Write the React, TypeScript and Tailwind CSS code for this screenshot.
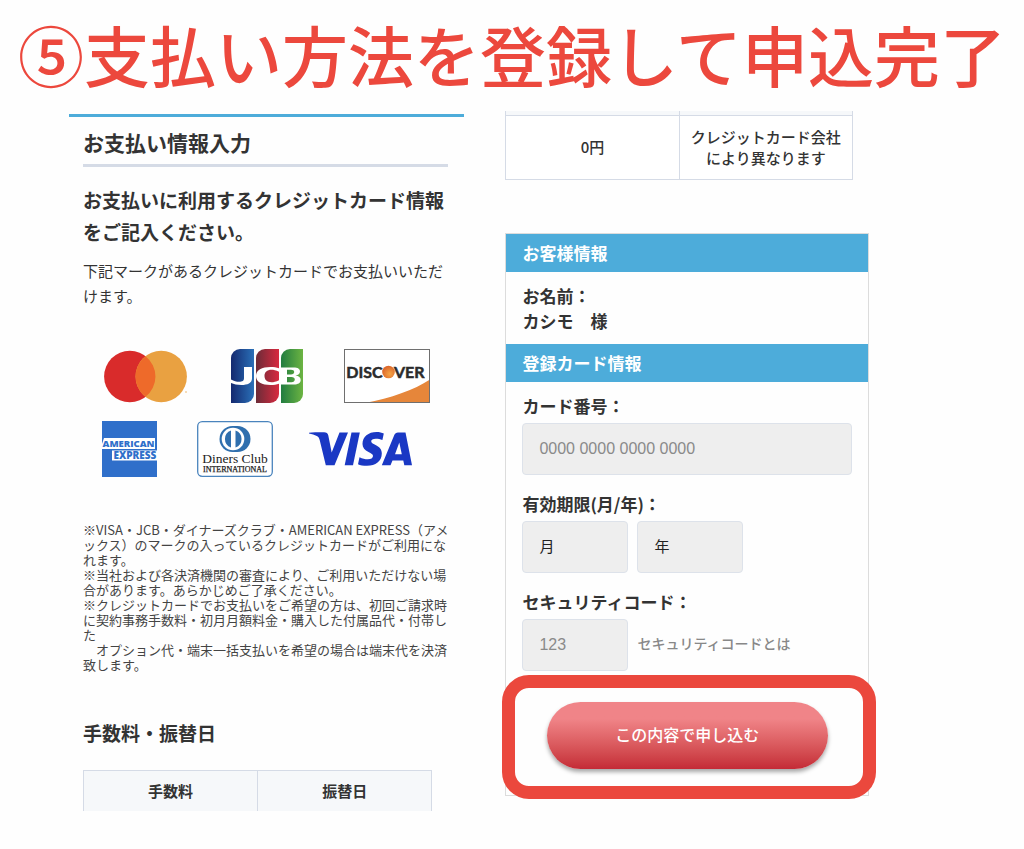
import React, { useState } from 'react'

type LabelProps = {
  htmlFor: string;
  text: string;
}

const Label = ({ htmlFor, text }: LabelProps) => (
  <label htmlFor={htmlFor} className="mb-[5px] block text-[17px] leading-[25px] font-bold">
    {text}
  </label>
)

const BarTitle = ({ text }: { text: string }) => (
  <h3 className="bg-[#4dacda] px-4 text-[17px] leading-[38px] font-bold text-white">{text}</h3>
)

const Mastercard = () => (
  <svg width="83" height="54" viewBox="0 0 83 54" role="img" aria-label="Mastercard">
    <circle cx="25.8" cy="27.5" r="25.7" fill="#d92b2b" />
    <circle cx="57.2" cy="27.5" r="25.7" fill="#e9a141" />
    <path d="M41.5 7.2a25.7 25.7 0 0 1 0 40.6a25.7 25.7 0 0 1 0-40.6Z" fill="#ee6a2a" />
    <circle cx="82" cy="43" r="0.7" fill="#e9a141" />
  </svg>
)

const Jcb = () => (
  <svg width="73" height="54" viewBox="-2 0 73 54" className="overflow-visible" role="img" aria-label="JCB">
    <defs>
      <linearGradient id="jcbBlue">
        <stop offset="0" stopColor="#14296f" />
        <stop offset="1" stopColor="#2a70b8" />
      </linearGradient>
      <linearGradient id="jcbRed">
        <stop offset="0" stopColor="#6b2c38" />
        <stop offset="1" stopColor="#d8293f" />
      </linearGradient>
      <linearGradient id="jcbGreen">
        <stop offset="0" stopColor="#217c40" />
        <stop offset="1" stopColor="#6cb442" />
      </linearGradient>
    </defs>
    <path d="M9 0H23V45a9 9 0 0 1-9 9H0V9a9 9 0 0 1 9-9Z" fill="url(#jcbBlue)" />
    <path d="M34 0H48V45a9 9 0 0 1-9 9H25V9a9 9 0 0 1 9-9Z" fill="url(#jcbRed)" />
    <path d="M59 0H72V45a9 9 0 0 1-9 9H50V9a9 9 0 0 1 9-9Z" fill="url(#jcbGreen)" />
    <path
      d="M13 18H21V29.500C21 34 16.500 36 10.500 36C6 36 3 35.300 0 34V30.500C3 32 5.500 32.800 8 32.800C11.500 32.800 13 31.800 13 29V18Z"
      fill="#fff"
    />
    <path
      d="M48 19.300V22.800C45 21.300 42.500 20.800 40.500 20.800C36 20.800 33.500 23.200 33.500 27C33.500 30.800 36 33.200 40.500 33.200C42.500 33.200 45 32.700 48 31.200V34.700C45.500 35.600 43 36 39.500 36C31 36 25 33 25 27C25 21 31 18 39.500 18C43 18 45.500 18.400 48 19.300Z"
      fill="#fff"
    />
    <path
      fillRule="evenodd"
      d="M50 18.500H62.500C67 18.500 69 20 69 22.500C69 24.800 67.300 26.200 64.500 26.600C68 27 69.700 28.500 69.700 31C69.700 34 67 35.500 63 35.500H50V18.500ZM56 20.800V25.500H60C62 25.500 63.200 24.700 63.200 23.100C63.200 21.600 62 20.800 60 20.800H56ZM56 28V33.200H60.500C62.600 33.200 63.800 32.300 63.800 30.600C63.800 28.900 62.600 28 60.500 28H56Z"
      fill="#fff"
    />
  </svg>
)

const Discover = () => (
  <svg width="86" height="54" viewBox="0 0 86 54" role="img" aria-label="Discover">
    <defs>
      <radialGradient id="discoverBall" cx="0.6" cy="0.65" r="0.7">
        <stop offset="0" stopColor="#f5a445" />
        <stop offset="1" stopColor="#d85f28" />
      </radialGradient>
    </defs>
    <rect x="0.5" y="0.5" width="85" height="53" fill="#fff" />
    <path d="M86 30.500V54H21C47 49 70 41 86 30.500Z" fill="#e6863a" />
    <rect x="0.5" y="0.5" width="85" height="53" fill="none" stroke="#6f6f6f" />
    <g fill="#2b2b2b" stroke="#2b2b2b" strokeWidth="0.5" fontFamily="Lato, 'Liberation Sans', sans-serif" fontSize="16" fontWeight="700">
      <text x="38.500" y="28.500" textAnchor="end">DISC</text>
      <text x="50" y="28.500">VER</text>
    </g>
    <circle cx="44.500" cy="23" r="6.300" fill="url(#discoverBall)" />
  </svg>
)

const Amex = () => (
  <svg width="59" height="56" viewBox="0 0 59 56" role="img" aria-label="American Express">
    <rect width="55" height="56" fill="#2f6fca" />
    <path d="M2 17H53V28H0V23Z" fill="#fff" />
    <path d="M10 29.500H55V39.500H10Z" fill="#fff" />
    <g fill="#2f6fca" fontFamily="'Open Sans', sans-serif" fontWeight="800">
      <text x="0.500" y="26" fontSize="9.500">AMERICAN</text>
      <text x="11.500" y="38" fontSize="10">EXPRESS</text>
    </g>
  </svg>
)

const Diners = () => (
  <svg width="76" height="56" viewBox="0 0 76 56" role="img" aria-label="Diners Club International">
    <rect x="0.7" y="0.7" width="74.600" height="54.600" rx="4.500" fill="#fff" stroke="#4a84bd" strokeWidth="1.300" />
    <rect x="22.500" y="5" width="31" height="26" rx="13" fill="#2f6fae" />
    <circle cx="36" cy="18" r="11.300" fill="#fff" />
    <path d="M34 9.500a9 9 0 0 0 0 17ZM38.500 9.500a9 9 0 0 1 0 17Z" fill="#2f6fae" />
    <g fill="#222" fontFamily="'Liberation Serif', serif" textAnchor="middle">
      <text x="38" y="42" fontSize="13.500">Diners Club</text>
      <text x="38" y="51" fontSize="8" stroke="#222" strokeWidth="0.250">INTERNATIONAL</text>
    </g>
  </svg>
)

const Visa = () => (
  <svg width="103" height="34" viewBox="0 0 103 34" role="img" aria-label="Visa">
    <g fill="#1a38c4">
      <path d="M0 0.800C3.500 0.300 8 0.300 15 0.300C17.500 0.300 18.800 1.300 19.300 3.500L22.700 20.500L30.500 0.500H39L25.500 33.300H16.800L10.800 8.500C10.200 6 9.800 5 7.800 4C5.500 2.800 3 2 0 1.500Z" />
      <path d="M42.500 0.500H50.800L44 33.300H35.700Z" />
      <path d="M74.800 1.600L73.400 8.100C71.300 7.200 69.200 6.700 66.800 6.700C63.800 6.700 62.200 7.800 62.200 9.300C62.200 11 64.500 12 67 13.300C70.500 15 72.800 17.500 72.800 21.500C72.800 29.300 66.500 33.800 58 33.800C54.300 33.800 51 33.100 49 32.200L50.500 25.300C53.500 26.800 56 27.300 58.800 27.300C62 27.300 64 26 64 24C64 22.300 62.300 21.400 59.500 20C55.800 18.200 53.500 15.700 53.500 12C53.500 4.800 59.300 0 67.600 0C70.500 0 73 0.600 74.800 1.600Z" />
      <path
        fillRule="evenodd"
        d="M89 0.500H96.500L103 33.300H95.300L94.300 28.500H83.500L81.500 33.300H72.800L85.300 3C86 1.400 87.200 0.500 89 0.500ZM90.300 10.500L86 22.200H92.800Z"
      />
    </g>
  </svg>
)

const fieldStyle =
  "h-[52px] appearance-none rounded-[4px] border border-[#dde2ea] bg-[#eeeeee] px-4 font-normal text-[#222] placeholder:text-[#8a8a8a]"

const PaymentInfo = () => (
  <section className="pt-[3px]">
    <div className="border-t-3 border-[#4dacda] pr-4 pl-[14px]">
      <h2 className="border-b-3 border-[#d5dbe6] pt-1 text-[21px] leading-[43px] font-bold">お支払い情報入力</h2>
      <h3 className="mt-[17px] text-[19px] leading-[32px] font-bold">
        お支払いに利用するクレジットカード情報
        <br />
        をご記入ください。
      </h3>
      <p className="mt-[10px] text-[15px] leading-[25px]">
        下記マークがあるクレジットカードでお支払いいただ
        <br />
        けます。
      </p>
      <div className="mt-[41px] flex gap-[42px] pl-[21px]">
        <Mastercard />
        <Jcb />
        <Discover />
      </div>
      <div className="mt-[18px] flex items-center gap-9 pl-[19px]">
        <Amex />
        <Diners />
        <Visa />
      </div>
      <p className="mt-[45px] text-[13px] leading-[15px] whitespace-nowrap text-[#444]">
        ※VISA・JCB・ダイナーズクラブ・AMERICAN EXPRESS（アメ
        <br />
        ックス）のマークの入っているクレジットカードがご利用にな
        <br />
        れます。
        <br />
        ※当社および各決済機関の審査により、ご利用いただけない場
        <br />
        合があります。あらかじめご了承ください。
        <br />
        ※クレジットカードでお支払いをご希望の方は、初回ご請求時
        <br />
        に契約事務手数料・初月月額料金・購入した付属品代・付帯し
        <br />
        た
        <br />
        {'\u3000'}オプション代・端末一括支払いを希望の場合は端末代を決済
        <br />
        致します。
      </p>
      <h3 className="mt-[45px] text-[19px] leading-[32px] font-bold">手数料・振替日</h3>
      <div className="mt-[21px] pr-4">
        <table className="w-full table-fixed border-collapse">
          <thead>
            <tr>
              <th className="border border-b-0 border-[#d5dbe6] bg-[#f6f8fa] text-[15px] leading-[40px] font-bold">手数料</th>
              <th className="border border-b-0 border-[#d5dbe6] bg-[#f6f8fa] text-[15px] leading-[40px] font-bold">振替日</th>
            </tr>
          </thead>
        </table>
      </div>
    </div>
  </section>
)

const CardForm = () => {
  const [cardData, setCardData] = useState({ cardNumber: '', securityCode: '' });
  const handleChange = (e: React.ChangeEvent<HTMLInputElement>) => {
    setCardData((prev) => ({
      ...prev,
      [e.target.name]: e.target.value,
    }));
  };

  return (
    <form className="mt-[53px] border border-[#dcdcdc]" onSubmit={(e) => e.preventDefault()}>
      <BarTitle text="お客様情報" />
      <p className="px-4 py-[11px] text-[17px] leading-[25px] font-bold">
        お名前：
        <br />
        カシモ{'\u3000'}様
      </p>
      <BarTitle text="登録カード情報" />
      <div className="flex flex-col gap-4 px-4 pt-[11px]">
        <div>
          <Label htmlFor="cardNumber" text="カード番号：" />
          <input
            id="cardNumber"
            name="cardNumber"
            type="text"
            placeholder="0000 0000 0000 0000"
            value={cardData.cardNumber}
            onChange={handleChange}
            className={`${fieldStyle} block w-full text-[16px] font-['Liberation_Sans','Noto_Sans_CJK_JP',sans-serif]`}
          />
        </div>
        <div>
          <Label htmlFor="month" text="有効期限(月/年)：" />
          <div className="flex gap-[9px]">
            <select id="month" className={`${fieldStyle} w-[106px] text-[15px]`}>
              <option>月</option>
            </select>
            <select id="year" aria-label="年" className={`${fieldStyle} w-[106px] text-[15px]`}>
              <option>年</option>
            </select>
          </div>
        </div>
        <div>
          <Label htmlFor="securityCode" text="セキュリティコード：" />
          <div className="flex items-center gap-[9px]">
            <input
              id="securityCode"
              name="securityCode"
              type="text"
              placeholder="123"
              value={cardData.securityCode}
              onChange={handleChange}
              className={`${fieldStyle} w-[106px] text-[16px] font-['Liberation_Sans','Noto_Sans_CJK_JP',sans-serif]`}
            />
            <a href="#security" className="pb-[2px] text-[14px] font-medium text-[#888]">セキュリティコードとは</a>
          </div>
        </div>
      </div>
      <div className="relative mt-[31px] mb-[26px] flex justify-center">
        <button
          type="submit"
          className="h-[67px] w-[281px] rounded-full bg-linear-to-b from-[#f08488] from-25% to-[#c42a36] pb-[2px] text-[16px] font-medium text-white shadow-[0_3px_4px_rgba(0,0,0,0.35)]"
        >
          この内容で申し込む
        </button>
        {/* highlight ring around the submit button */}
        <span className="pointer-events-none absolute -top-[27px] -right-2 -bottom-[30px] -left-1 rounded-[27px] border-13 border-[#eb483d]" />
      </div>
    </form>
  )
}

const App = () => {
  return (
    <main className="min-h-screen bg-[#fefefe] font-['Noto_Sans_CJK_JP',sans-serif] text-[#333]" lang="ja">
      <h1 className="mb-[5px] pl-[18px] text-[66px] leading-[106px] font-medium whitespace-nowrap text-[#ec483d]">
        ⑤支払い方法を登録して申込完了
      </h1>
      <div className="grid grid-cols-[394fr_365fr] items-start gap-[41px] pr-[155px] pl-[69px]">
        <PaymentInfo />
        <section>
          <div className="pr-4">
            <table className="w-full table-fixed border-collapse bg-white text-center text-[15px] leading-[21px] font-medium">
              <tbody>
                <tr className="h-1 bg-[#f6f8fa]">
                  <td className="border border-t-0 border-[#d5dbe6]" />
                  <td className="border border-t-0 border-[#d5dbe6]" />
                </tr>
                <tr>
                  <td className="border border-[#d5dbe6] pt-[10px] pb-[11px]">0円</td>
                  <td className="border border-[#d5dbe6] pt-[10px] pb-[11px]">
                    クレジットカード会社
                    <br />
                    により異なります
                  </td>
                </tr>
              </tbody>
            </table>
          </div>
          <CardForm />
        </section>
      </div>
    </main>
  )
}

export default App
